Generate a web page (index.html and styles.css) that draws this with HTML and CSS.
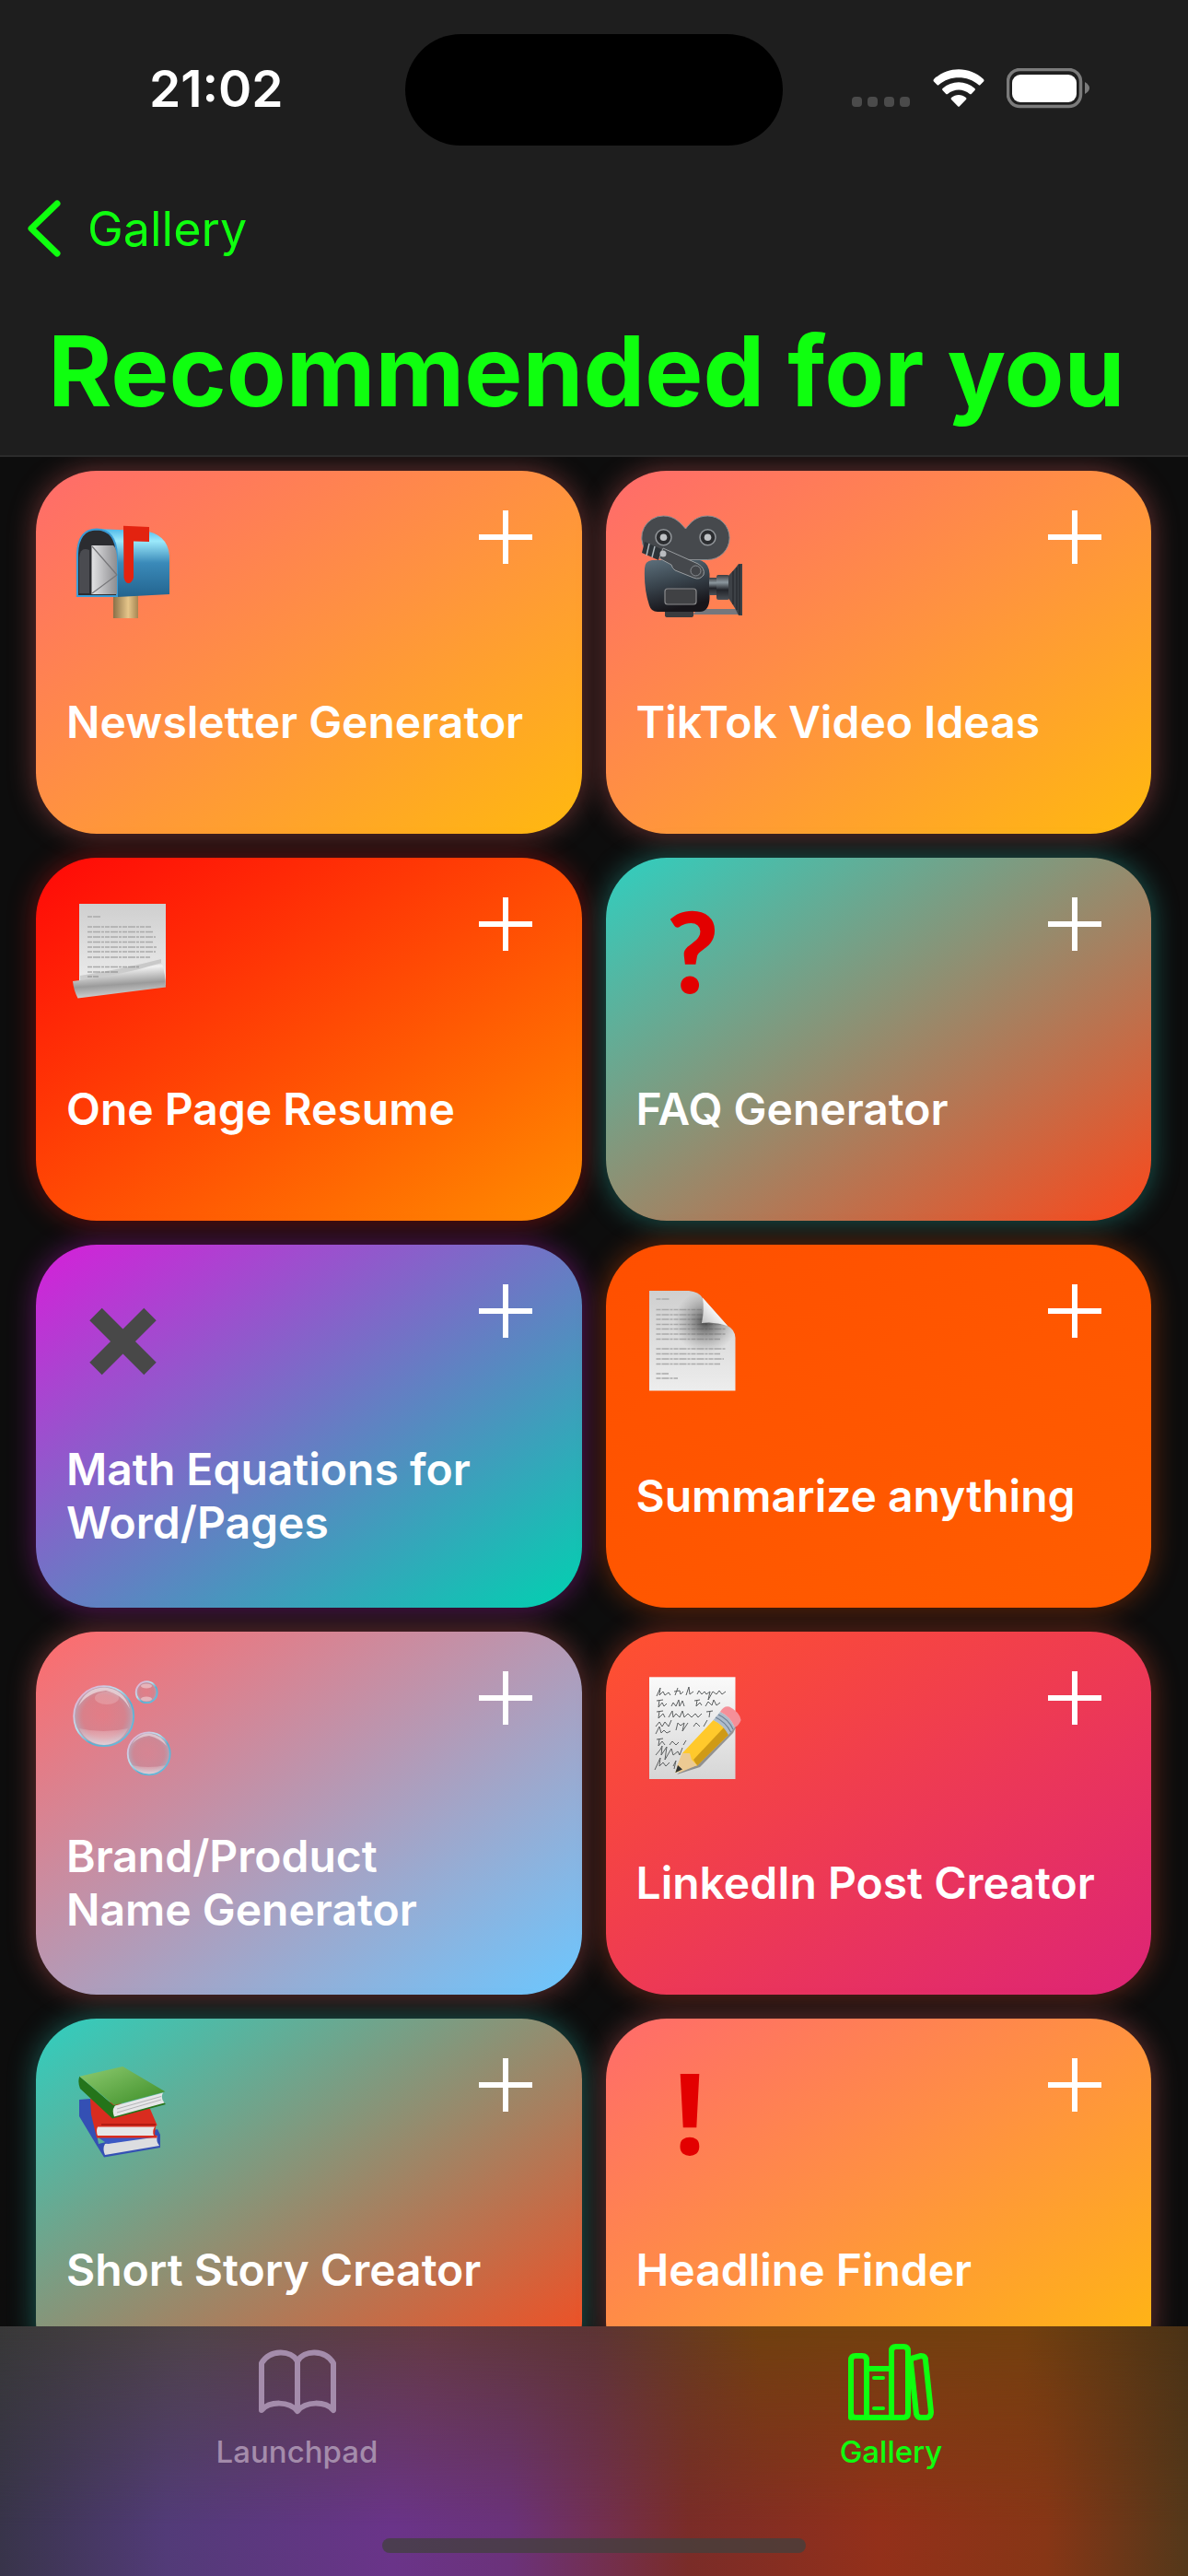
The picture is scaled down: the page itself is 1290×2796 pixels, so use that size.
FILE: index.html
```
<!DOCTYPE html>
<html lang="en">
<head>
    <meta charset="UTF-8">
    <meta name="viewport" content="width=device-width, initial-scale=1.0">
    <title>Recommended for you</title>
    <link rel="stylesheet" href="styles.css">
</head>
<body>
    <header class="header">
        <div class="status-bar">
            <span class="time">21:02</span>
            <div class="island"></div>
            <div class="status-icons">
                <svg width="64" height="44" viewBox="0 0 64 44" fill="#4b4b4b">
                    <rect x="0" y="31" width="11" height="11" rx="4"/>
                    <rect x="17" y="31" width="11" height="11" rx="4"/>
                    <rect x="35" y="31" width="11" height="11" rx="4"/>
                    <rect x="52" y="31" width="11" height="11" rx="4"/>
                </svg>
                <svg width="56" height="44" viewBox="0 0 56 44" fill="#fff">
                    <path d="M1 12 Q0 13.500 1 14.500 L4.500 18 Q5.500 19 6.500 18 C18 7.500 38 7.500 49.500 18 Q50.500 19 51.500 18 L55 14.500 Q56 13.500 55 12 C40 -2.500 16 -2.500 1 12 Z"/>
                    <path d="M10.500 22 Q9.500 23 10.500 24 L14 27.800 Q15 28.800 16 28 C23 22 33 22 40 28 Q41 28.800 42 27.800 L45.500 24 Q46.500 23 45.500 22 C35.500 13 20.500 13 10.500 22 Z"/>
                    <path d="M20 32 Q19 33 20 34 L27 41.200 Q28 42.200 29 41.200 L36 34 Q37 33 36 32 C31 28 25 28 20 32 Z"/>
                </svg>
                <svg width="90" height="44" viewBox="0 0 90 44">
                    <rect x="1.500" y="1.500" width="79" height="40" rx="13" fill="none" stroke="#7b7b7b" stroke-width="3.500"/>
                    <rect x="6" y="7" width="70" height="30" rx="9" fill="#fff"/>
                    <path d="M85 15 Q90 18 90 21.500 Q90 25 85 28 Z" fill="#7b7b7b"/>
                </svg>
            </div>
        </div>
        <nav class="nav-bar">
            <a href="#gallery" class="back">
                <svg width="38" height="62" viewBox="0 0 38 62" fill="none" stroke="#0fff0f" stroke-width="7" stroke-linecap="round" stroke-linejoin="round">
                    <path d="M33 4 L5 31 L33 58"/>
                </svg>
                Gallery
            </a>
        </nav>
        <h1>Recommended for you</h1>
    </header>

    <main class="content">
        <ul class="cards">
            <li class="card sunset">
                <div class="card-top">
                    <svg class="emoji" viewBox="0 0 112 112">
                        <defs>
                            <linearGradient id="boxBlue" x1="0" y1="0" x2="0" y2="1">
                                <stop offset="0" stop-color="#4fb9ea"/><stop offset=".18" stop-color="#9be9fb"/>
                                <stop offset=".5" stop-color="#3a8ab9"/><stop offset="1" stop-color="#23648f"/>
                            </linearGradient>
                            <linearGradient id="post"><stop offset="0" stop-color="#8a7048"/><stop offset=".6" stop-color="#e6c68a"/><stop offset="1" stop-color="#a58552"/></linearGradient>
                            <linearGradient id="letter"><stop offset="0" stop-color="#e2e2e4"/><stop offset="1" stop-color="#8d8d90"/></linearGradient>
                        </defs>
                        <rect x="46" y="86" width="27" height="26" fill="url(#post)"/>
                        <path d="M28 15 L78 17 Q105 20 107 44 V86 L50 89 Z" fill="url(#boxBlue)"/>
                        <path d="M7 88 V42 Q8 15.500 28 15.500 Q49 16 50 44 V88 Z" fill="#2b2c30" stroke="#3a9bd6" stroke-width="2"/>
                        <path d="M9 85 V46 Q10 34 20 38 V85 Z" fill="#4a4b50"/>
                        <path d="M22.500 33 H46 Q50 36 50 48 V86 H22.500 Z" fill="url(#letter)"/>
                        <path d="M23 34 L50 65 L23 85" fill="none" stroke="#77777a" stroke-width="1.200"/>
                        <path d="M57 11.700 L85 13 V29 L68 28.500 V68 Q66 74 62.500 74 Q59 74 57.500 68 Z" fill="#e32310"/>
                    </svg>
                    <button class="add" aria-label="Add Newsletter Generator"></button>
                </div>
                <h2>Newsletter Generator</h2>
            </li>

            <li class="card sunset">
                <div class="card-top">
                    <svg class="emoji" viewBox="0 0 112 112">
                        <defs>
                            <linearGradient id="camBody" x1="0" y1="0" x2=".3" y2="1"><stop offset="0" stop-color="#5d707c"/><stop offset=".5" stop-color="#39444d"/><stop offset="1" stop-color="#17151a"/></linearGradient>
                            <linearGradient id="lens" x1="0" y1="0" x2="0" y2="1"><stop offset="0" stop-color="#3b3c3f"/><stop offset=".3" stop-color="#8c979e"/><stop offset=".6" stop-color="#22242a"/><stop offset="1" stop-color="#4b5056"/></linearGradient>
                        </defs>
                        <path d="M24.300 1 C37 1 43 9 48.500 15 C54 8 60 1 72.400 1 A23.500 23.500 0 0 1 72.400 48.500 H30 L5 38 A23.500 23.500 0 0 1 24.300 1 Z" fill="#46494d" stroke="#8b8f93"/>
                        <path d="M62 102 H108 V108 H56 Z" fill="#77777c"/>
                        <path d="M12 49 H64 Q74 52 74.500 64 V90 Q74 105 64 105 H18 Q11 105 9 98 Q3 80 4 58 Q4 50 12 49 Z" fill="url(#camBody)"/>
                        <path d="M26 105 H57 V109 Q57 111 54 111 H29 Q26 111 26 109 Z" fill="#3a3b3e"/>
                        <rect x="26" y="80" width="34" height="17" rx="3" fill="#404144" stroke="#8a8a8c" stroke-width="1.200"/>
                        <rect x="74" y="68" width="9" height="19" fill="url(#lens)"/>
                        <rect x="82" y="65" width="14" height="27" rx="2" fill="url(#lens)"/>
                        <path d="M95 66 L103 57 L106 53 H110 V109 H106 L102 101 L95 90 Z" fill="#3d4146"/>
                        <path d="M100 61 V97 M104 57 V103 M107 54 V108" stroke="#202226" fill="none"/>
                        <path d="M24 36 L62 53 Q70 58 68 65 Q64 71 57 68 L37 60 Q34 58 33 54 L20 47 Z" fill="#45484c" stroke="#999da0"/>
                        <circle cx="59.500" cy="60.500" r="5.500" fill="#424448" stroke="#8b8f93"/>
                        <path d="M4 29 L22 37 L19 49 L1 41 Z" fill="#2d3338"/>
                        <path d="M9 31 L6 44 M15 34 L12 46" stroke="#adb5ba" stroke-width="1.500"/>
                        <circle cx="24" cy="42" r="3.500" fill="#b9bcc0"/>
                        <g fill="#2b2d30" stroke="#919599" stroke-width="1.500"><circle cx="24.500" cy="24.300" r="8.500"/><circle cx="72.500" cy="24.300" r="8.500"/></g>
                        <g fill="#bfc2c5"><circle cx="24.500" cy="24.300" r="3.800"/><circle cx="72.500" cy="24.300" r="3.800"/></g>
                    </svg>
                    <button class="add" aria-label="Add TikTok Video Ideas"></button>
                </div>
                <h2>TikTok Video Ideas</h2>
            </li>

            <li class="card fire">
                <div class="card-top">
                    <svg class="emoji" viewBox="0 0 112 112">
                        <defs>
                            <linearGradient id="sheet" x1="0" y1="0" x2="0" y2="1"><stop offset="0" stop-color="#cfcfcf"/><stop offset="1" stop-color="#ededed"/></linearGradient>
                            <linearGradient id="roll" x1="0" y1="0" x2=".18" y2="1"><stop offset="0" stop-color="#a8a8a8"/><stop offset=".25" stop-color="#f2f2f2"/><stop offset=".68" stop-color="#9b9b9b"/><stop offset="1" stop-color="#d0d0d0"/></linearGradient>
                        </defs>
                        <path d="M9 2 H103 V90 L9 92 Z" fill="url(#sheet)"/>
                        <path d="M18 16 H33 M18 27 H87 M18 32.500 H90 M18 38 H92 M18 43.500 H90 M18 49 H94 M18 54 H92 M18 60 H86 M18 70.500 H74 M18 76 H52 M18 81 H30" stroke="#aaa" stroke-width="1.500" stroke-dasharray="5 1 8 1 3 1"/>
                        <path d="M10 80 Q60 72 98 62 L98 70 L10 88 Z" fill="#777" opacity=".25"/>
                        <path d="M2 86 Q54 80 98.600 66 Q103 78 103 92.500 L7.500 104.500 Q3 96 2 86 Z" fill="url(#roll)"/>
                    </svg>
                    <button class="add" aria-label="Add One Page Resume"></button>
                </div>
                <h2>One Page Resume</h2>
            </li>

            <li class="card lagoon">
                <div class="card-top">
                    <svg class="emoji" viewBox="0 0 112 112">
                        <text class="mark" x="56" y="99" text-anchor="middle">?</text>
                    </svg>
                    <button class="add" aria-label="Add FAQ Generator"></button>
                </div>
                <h2>FAQ Generator</h2>
            </li>

            <li class="card violet">
                <div class="card-top">
                    <svg class="emoji" viewBox="0 0 112 112">
                        <path d="M27 27.500 L86 86.500 M86 27.500 L27 86.500" stroke="#484848" stroke-width="19"/>
                    </svg>
                    <button class="add" aria-label="Add Math Equations for Word/Pages"></button>
                </div>
                <h2>Math Equations for<br>Word/Pages</h2>
            </li>

            <li class="card orange">
                <div class="card-top">
                    <svg class="emoji" viewBox="0 0 112 112">
                        <defs>
                            <linearGradient id="fold" x1="0" y1="1" x2="1" y2="0"><stop offset="0" stop-color="#bdbdbd"/><stop offset=".5" stop-color="#f4f4f4"/><stop offset="1" stop-color="#fff"/></linearGradient>
                            <radialGradient id="foldShade" cx="70" cy="36" r="34" gradientUnits="userSpaceOnUse"><stop offset="0" stop-color="#333" stop-opacity=".85"/><stop offset="1" stop-color="#888" stop-opacity="0"/></radialGradient>
                        </defs>
                        <path d="M9 2 H52 Q63 3 67 10 L94 40 Q102 44 102.500 53 V110.500 H9 Z" fill="url(#sheet)"/>
                        <path d="M16.500 11 H31 M16.500 22.500 H66 M16.500 28 H68 M16.500 33 H68 M16.500 38.500 H92 M16.500 43.500 H92 M16.500 49 H92 M16.500 54.500 H86 M16.500 65 H92 M16.500 70.500 H86 M16.500 76 H90 M16.500 81.500 H86 M16.500 92 H30 M16.500 97 H40" stroke="#aaa" stroke-width="1.500" stroke-dasharray="5 1 8 1 3 1"/>
                        <path d="M9 2 H52 Q63 3 67 10 L94 40 Q102 44 102.500 53 V110.500 H9 Z" fill="url(#foldShade)"/>
                        <path d="M67 9.500 L94 40 Q80 35 66 37 Q69 22 67 9.500 Z" fill="url(#fold)"/>
                    </svg>
                    <button class="add" aria-label="Add Summarize anything"></button>
                </div>
                <h2>Summarize anything</h2>
            </li>

            <li class="card candy">
                <div class="card-top">
                    <svg class="emoji" viewBox="0 0 112 112">
                        <defs>
                            <radialGradient id="bubble"><stop offset="0" stop-color="#c98c94" stop-opacity=".1"/><stop offset=".7" stop-color="#b7909c" stop-opacity=".3"/><stop offset="1" stop-color="#a9b4c8" stop-opacity=".75"/></radialGradient>
                            <linearGradient id="bubbleEdge" x1="0" y1="0" x2="1" y2="1"><stop offset="0" stop-color="#f3a0c8"/><stop offset=".4" stop-color="#b7e2f0"/><stop offset=".6" stop-color="#58b0d2"/><stop offset="1" stop-color="#6cbfe0"/></linearGradient>
                            <linearGradient id="bubbleFoot" x1="0" y1="0" x2="0" y2="1"><stop offset="0" stop-color="#fff" stop-opacity=".15"/><stop offset="1" stop-color="#fff" stop-opacity=".5"/></linearGradient>
                        </defs>
                        <g fill="url(#bubble)" stroke="url(#bubbleEdge)" stroke-width="1.800">
                            <circle cx="35.700" cy="43.700" r="32.500"/>
                            <circle cx="82.200" cy="17.700" r="11.500"/>
                            <circle cx="84.700" cy="84.300" r="23"/>
                        </g>
                        <g fill="#fff">
                            <path d="M9 57 Q35 63 62 57 Q54 74 36 75 Q17 74 9 57 Z" fill="url(#bubbleFoot)"/>
                            <path d="M66 97 Q84 101 103 97 Q96 106 85 106.500 Q72 106 66 97 Z" fill="url(#bubbleFoot)"/>
                            <path d="M8 33 Q16 13 36 12.500 Q58 14 64 36 Q56 20 38 16 Q18 18 8 33 Z" opacity=".5"/>
                            <path d="M66 74 Q74 62 85 62.500 Q99 64 104 76 Q97 68 85 65 Q73 66 66 74 Z" opacity=".45"/>
                            <ellipse cx="39" cy="24" rx="13" ry="7" opacity=".18"/>
                            <ellipse cx="82" cy="11" rx="6" ry="2.500" opacity=".4"/>
                            <ellipse cx="82" cy="25" rx="6" ry="2.500" opacity=".4"/>
                        </g>
                    </svg>
                    <button class="add" aria-label="Add Brand/Product Name Generator"></button>
                </div>
                <h2>Brand/Product<br>Name Generator</h2>
            </li>

            <li class="card rose">
                <div class="card-top">
                    <svg class="emoji" viewBox="0 0 112 112">
                        <defs>
                            <linearGradient id="note" x1="0" y1="0" x2="0" y2="1"><stop offset="0" stop-color="#fafafa"/><stop offset="1" stop-color="#d6d6d6"/></linearGradient>
                        </defs>
                        <rect x="9" y="1.300" width="93.500" height="110.700" fill="url(#note)"/>
                        <g fill="none" stroke="#5c5f60" stroke-width="1" stroke-linejoin="round">
                            <path d="M17 22 L21 13 L20 21 L24 17 L26 21 L30 18 L32 21 M37 21 L40 13 M36 17 L42 16 L43 20 L46 17 M49 21 L52 12 L53 20 L57 17 M61 20 L63 16 L66 20 L69 17 L71 20 L75 17 L73 26 L78 17 L82 20 L85 16 L88 20 L92 17"/>
                            <path d="M17 27 L24 26 M20 26 L19 34 L23 29 L25 33 L28 30 M33 33 L35 29 L38 33 L41 26 L42 33 L45 27 L47 33 M58 27 L64 26 M61 26 L60 33 L64 29 L66 32 M70 33 L73 28 L77 32 L79 26 L82 32 L86 29"/>
                            <path d="M17 39 L24 38 M20 38 L19 46 L24 41 L26 45 M30 45 L34 38 L35 45 L38 41 L42 45 L45 38 L47 45 L51 41 L55 45 L59 41 L62 45 L66 41 M71 39 L78 38 M75 38 L74 45"/>
                            <path d="M16 55 L20 50 L23 55 L26 50 L30 55 L33 48 M38 59 L40 51 L43 54 L47 51 L45 60 L51 51 M57 55 L60 51 L64 55 M68 55 L72 48"/>
                            <path d="M16 63 L20 55 L22 62 L25 59 L28 62 L32 60"/>
                            <path d="M17 69 L24 68 M20 68 L19 76 L23 71 L26 75 M31 75 L34 71 L38 75 L41 72 M46 75 L49 70"/>
                            <path d="M16 86 L21 80 L23 76 L22 86 L28 77 L26 91 L33 79 L35 86 L40 82 L42 86 L45 78"/>
                            <path d="M15 102 L21 89 L20 98 L24 94 L27 98 L31 94 M35 98 L38 92 L36 101"/>
                        </g>
                        <path d="M39 107 L64 99 L100 62 L104 54 L96 58 Z" fill="#333" opacity=".45"/>
                        <path d="M44.800 84 L78.600 48 Q90 53 95 64 L61 97.500 Q52 99 37.400 105 Z" fill="#ffc92c"/>
                        <path d="M61 97.500 L95 64 Q94 60 90 56 L57 91 Z" fill="#cf9a16"/>
                        <path d="M44.800 84 L53 84 L55 91 L61 97 L42 105 L39 98 Z" fill="#ecca93"/>
                        <path d="M40 97 L45 101.500 L37.400 105 Z" fill="#2d3032"/>
                        <path d="M78.600 48 L86 39 Q97 44 102 56 L95 64 Q89 53 78.600 48 Z" fill="#aebccb"/>
                        <path d="M81 45 Q92 50 97.500 61 M84 42 Q95 47 100 58" fill="none" stroke="#6f8296" stroke-width="1.200"/>
                        <path d="M86 39 Q90 32 96 33.500 Q107 39 108.600 48 Q107 53 102 56 Q97 44 86 39 Z" fill="#f58f98"/>
                    </svg>
                    <button class="add" aria-label="Add LinkedIn Post Creator"></button>
                </div>
                <h2>LinkedIn Post Creator</h2>
            </li>

            <li class="card lagoon">
                <div class="card-top">
                    <svg class="emoji" viewBox="0 0 112 112">
                        <defs>
                            <linearGradient id="green" x1="0" y1="0" x2="1" y2="1"><stop offset="0" stop-color="#8ecb70"/><stop offset="1" stop-color="#3b8c26"/></linearGradient>
                        </defs>
                        <path d="M9 40 L21 39 L30 88 L94 72 L97 78 L97 92 L36 102.500 L27 88 L9 58 Z" fill="#3450b4"/>
                        <path d="M37 88 L94 79 Q92 85 96 90 L37 100 Q34 93 37 88 Z" fill="#dcdde0"/>
                        <path d="M28 80 L96 80 L40 88 Z" fill="#3c58c4"/>
                        <path d="M21 39 L86 50 L93.500 67.500 L92 69 L91 78 L94 79.500 L93 81.500 H28 L22 56 Z" fill="#d92c1f"/>
                        <path d="M29 69.500 H91 Q88 74 90 79 H29 Q27 74 29 69.500 Z" fill="#e6e6e8"/>
                        <path d="M33 67 L92 67" stroke="#a51610" stroke-width="1.500"/>
                        <path d="M9.400 14.700 Q7 20 10 28 L45 60.500 L103 45 L101 43 L46 46 Z" fill="#24741a"/>
                        <path d="M48 46.500 L100 32.500 Q97 38 101.500 43.500 L47 58.500 Q44 51 48 46.500 Z" fill="#e6e6e8"/>
                        <path d="M50 50 L98 36.500 M50 54 L98 40" stroke="#b2b3b6"/>
                        <path d="M9.400 14.700 L56.300 4 L102.400 31.200 L47 46 Z" fill="url(#green)"/>
                    </svg>
                    <button class="add" aria-label="Add Short Story Creator"></button>
                </div>
                <h2>Short Story Creator</h2>
            </li>

            <li class="card sunset">
                <div class="card-top">
                    <svg class="emoji" viewBox="0 0 112 112">
                        <text class="mark exclamation" x="53" y="99" text-anchor="middle">!</text>
                    </svg>
                    <button class="add" aria-label="Add Headline Finder"></button>
                </div>
                <h2>Headline Finder</h2>
            </li>
        </ul>
    </main>

    <footer class="tab-bar">
        <nav class="tabs">
            <a href="#launchpad" class="tab">
                <svg width="84" height="90" viewBox="0 0 84 90" fill="none" stroke="currentColor" stroke-width="6" stroke-linejoin="round">
                    <path d="M42 22 C35 9 12 9 3 24 V75 C12 65 33 65 42 76 C51 65 72 65 81 75 V24 C72 9 49 9 42 22 Z M42 22 V76"/>
                </svg>
                Launchpad
            </a>
            <a href="#gallery" class="tab active">
                <svg width="94" height="90" viewBox="0 0 94 90" fill="none" stroke="currentColor" stroke-width="6" stroke-linejoin="round" stroke-linecap="round">
                    <path d="M3 83 V21 Q3 16 8 16 H15 Q20 16 20 21 V83 M20 30 H47 M47 83 V11 Q47 6 52 6 H60 Q65 6 65 11 V78 Q65 83 60 83 H8 Q3 83 3 78"/>
                    <path d="M28 40 H38 M28 73 H38" stroke-width="4"/>
                    <path d="M72 18 L79 16 Q84 16 84 21 L90 77 Q90 82 86 83 L79 83 Q75 83 74 79 L68 23 Q68 18 72 18 Z"/>
                </svg>
                Gallery
            </a>
        </nav>
        <div class="home-indicator"></div>
    </footer>
</body>
</html>
```

FILE: styles.css
```
* {
    box-sizing: border-box;
}
body {
    margin: 0;
    height: 100vh;
    display: flex;
    flex-direction: column;
    overflow: hidden;
    background-color: #0d0d0d;
    color: #fff;
    font-family: Inter, "Liberation Sans", sans-serif;
}
a {
    color: inherit;
    text-decoration: none;
}

/* header */
.header {
    background-color: #1e1e1e;
    border-bottom: 2px solid #2b2b2b;
    color: #0fff0f;
}
.status-bar {
    display: grid;
    grid-template-columns: 1fr 410px 1fr;
    align-items: center;
    align-content: start;
    height: 177px;
    padding-top: 37px;
}
.time {
    padding: 0 0 4px 162px;
    color: #fff;
    font-size: 55px;
    font-weight: 600;
}
.island {
    height: 121px;
    border-radius: 61px;
    background-color: #000;
}
.status-icons {
    display: flex;
    justify-content: flex-end;
    gap: 24px;
    padding: 0 107px 4px 0;
}
.nav-bar {
    display: flex;
    align-items: center;
    height: 142px;
    padding-left: 29px;
}
.back {
    display: flex;
    align-items: center;
    gap: 28px;
    font-size: 52px;
}
h1 {
    margin: 0;
    padding: 0 52px 7px;
    font-size: 106px;
    line-height: 168px;
    font-weight: 700;
    white-space: nowrap;
}

/* cards */
.content {
    flex: 1;
    min-height: 0;
    overflow: hidden;
}
.cards {
    display: grid;
    grid-template-columns: 1fr 1fr;
    gap: 26px;
    margin: 0;
    padding: 15px 40px 15px 39px;
    list-style: none;
}
.card {
    display: flex;
    flex-direction: column;
    height: 394px;
    padding: 43px 33px 8px;
    border-radius: 66px;
}
.card-top {
    display: flex;
    justify-content: space-between;
    align-items: flex-start;
    padding: 0 21px 0 5px;
}
.emoji {
    width: 112px;
    height: 112px;
    margin-top: 5px;
    overflow: visible;
}
.mark {
    font-family: Lato, "Open Sans", sans-serif;
    font-size: 122px;
    font-weight: 900;
    fill: #e30000;
}
.exclamation {
    font-family: "Open Sans", "Noto Sans", sans-serif;
    font-weight: 700;
}
.add {
    width: 58px;
    height: 58px;
    padding: 0;
    border: none;
    cursor: pointer;
    background:
        linear-gradient(#fff, #fff) center / 58px 6px no-repeat,
        linear-gradient(#fff, #fff) center / 6px 58px no-repeat;
}
.card h2 {
    flex: 1;
    display: flex;
    align-items: center;
    margin: 0;
    font-size: 48px;
    line-height: 58px;
    font-weight: 600;
    white-space: nowrap;
}
.sunset {
    background: linear-gradient(to bottom right, #ff6b6b, #ff9240 50%, #ffb90f);
    box-shadow: 0 0 30px rgba(255, 107, 107, 0.4);
}
.fire {
    background: linear-gradient(to bottom right, #ff0808, #ff8c00);
    box-shadow: 0 0 30px rgba(255, 20, 20, 0.4);
}
.lagoon {
    background: linear-gradient(to bottom right, #2fcfc0, #fb481b);
    box-shadow: 0 0 30px rgba(45, 212, 196, 0.4);
}
.violet {
    background: linear-gradient(to bottom right, #d61fd9, #00d2b0);
    box-shadow: 0 0 30px rgba(214, 31, 217, 0.4);
}
.orange {
    background: linear-gradient(to bottom right, #ff4f00, #ff5e00);
    box-shadow: 0 0 30px rgba(255, 80, 0, 0.4);
}
.candy {
    background: linear-gradient(to bottom right, #ff6b6b, #6bc7ff);
    box-shadow: 0 0 30px rgba(255, 107, 107, 0.4);
}
.rose {
    background: linear-gradient(to bottom right, #ff512f, #dd2476);
    box-shadow: 0 0 30px rgba(255, 81, 47, 0.4);
}

/* tab bar */
.tab-bar {
    position: relative;
    isolation: isolate;
    display: flex;
    flex-direction: column;
    justify-content: space-between;
    align-items: center;
    min-height: 271px;
    padding: 16px 0 25px;
    background: linear-gradient(to right, #38344a, #523b78 14%, #6a3489 33%, #6b327a 43%, #7a2c28 58%, #93301a 74%, #873616 88%, #54381a);
}
/* warm tint that fades out towards the bottom */
.tab-bar::before {
    content: "";
    position: absolute;
    inset: 0;
    z-index: -1;
    background: linear-gradient(to right, #383838, #4f4348 16%, #643a42 36%, #5c3434 50%, #70400f 64%, #73400f 86%, #4a3216);
    mask-image: linear-gradient(to bottom, #000, transparent 80%);
}
.tabs {
    display: flex;
    width: 100%;
}
.tab {
    flex: 1;
    display: flex;
    flex-direction: column;
    align-items: center;
    gap: 10px;
    color: #a48cab;
    font-size: 33px;
    line-height: 40px;
    font-weight: 500;
}
.tab.active {
    color: #0fff0f;
}
.home-indicator {
    width: 460px;
    height: 16px;
    border-radius: 8px;
    background-color: rgba(66, 64, 62, 0.75);
}
```
